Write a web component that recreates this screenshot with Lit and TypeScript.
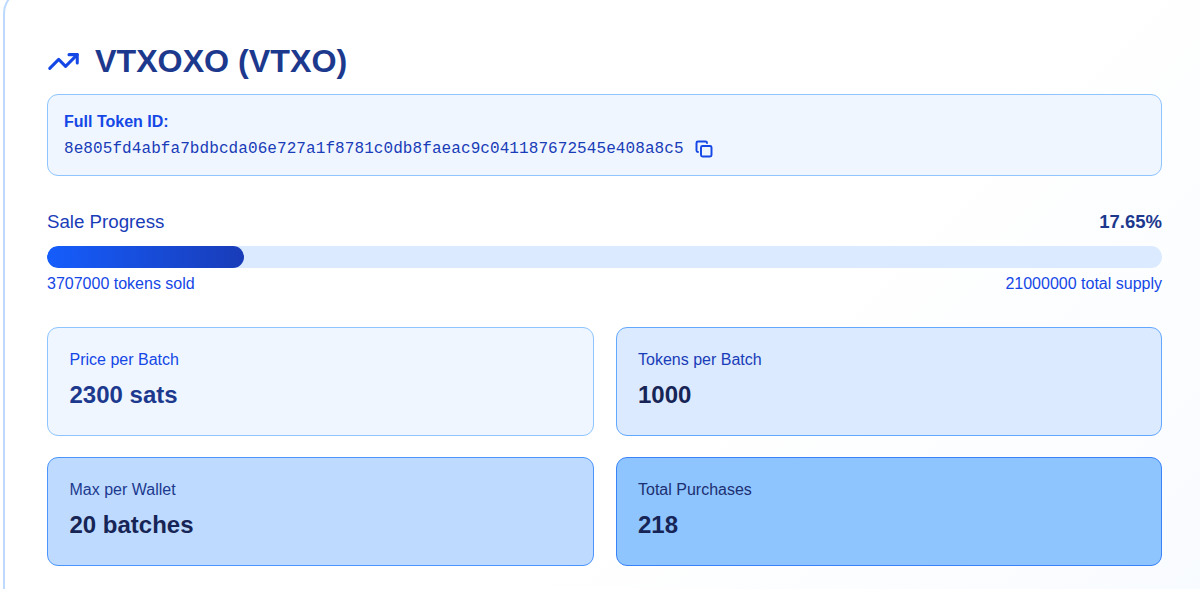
import { LitElement, css, html } from "lit";
import { customElement } from "lit/decorators.js";

const TOKEN_ID = "8e805fd4abfa7bdbcda06e727a1f8781c0db8faeac9c041187672545e408a8c5";

const STATS = [
  { label: "Price per Batch", value: "2300 sats", tone: "t1" },
  { label: "Tokens per Batch", value: "1000", tone: "t2" },
  { label: "Max per Wallet", value: "20 batches", tone: "t3" },
  { label: "Total Purchases", value: "218", tone: "t4" },
];

@customElement("app-root")
export class AppRoot extends LitElement {
  static styles = css`
    :host {
      display: block;
      height: 589px;
      overflow: hidden;
      background: #fff;
      font-family: "Liberation Sans", Arial, sans-serif;
    }
    .card {
      box-sizing: border-box;
      width: 1204px;
      height: 640px;
      margin: -12px 0 0 3px;
      padding: 48px 43px 0 42px;
      border: 2px solid #bedbff;
      border-radius: 26px;
      background: linear-gradient(135deg, #ffffff 60%, #f8fbff 100%);
    }
    .title {
      display: flex;
      align-items: center;
      gap: 15px;
      height: 47px;
      margin: 0 0 9px;
      color: #1c398e;
      font-size: 32.2px;
      font-weight: 700;
    }
    .title svg {
      width: 33px;
      height: 33px;
      color: #1447e6;
    }
    .id-box {
      box-sizing: border-box;
      height: 82px;
      padding: 17px 16px 0;
      border: 1px solid #8ec5ff;
      border-radius: 11px;
      background: #eff6ff;
    }
    .id-label {
      color: #1447e6;
      font-size: 16px;
      font-weight: 700;
      line-height: 20px;
    }
    .id-row {
      display: flex;
      align-items: center;
      gap: 11px;
      margin-top: 8px;
      color: #193cb8;
      font-family: "Liberation Mono", monospace;
      font-size: 16px;
      letter-spacing: 0.08px;
    }
    .id-row svg {
      width: 18px;
      height: 18px;
      color: #1447e6;
    }
    .progress-head {
      display: flex;
      justify-content: space-between;
      align-items: center;
      margin-top: 35px;
      height: 22px;
    }
    .progress-label {
      color: #193cb8;
      font-size: 18.7px;
    }
    .progress-pct {
      color: #1c398e;
      font-size: 18.5px;
      font-weight: 700;
    }
    .track {
      height: 22px;
      margin-top: 13px;
      border-radius: 11px;
      background: #dbeafe;
      overflow: hidden;
    }
    .fill {
      height: 100%;
      border-radius: 11px;
      background: linear-gradient(90deg, #155dfc, #193cb8);
    }
    .progress-foot {
      display: flex;
      justify-content: space-between;
      margin-top: 6px;
      color: #1447e6;
      font-size: 16px;
      line-height: 20px;
    }
    .stats {
      display: grid;
      grid-template-columns: 1fr 1fr;
      gap: 21px 22px;
      margin-top: 33px;
    }
    .stat {
      box-sizing: border-box;
      height: 109px;
      padding: 22px 21.5px;
      border: 1px solid #8ec5ff;
      border-radius: 11px;
    }
    .stat .label {
      font-size: 16px;
      line-height: 20px;
    }
    .stat .value {
      margin-top: 9px;
      font-size: 24px;
      font-weight: 700;
      line-height: 32px;
    }
    .t1 { background: #eff6ff; }
    .t1 .label { color: #1447e6; }
    .t1 .value { color: #1c398e; }
    .t2 { background: #dbeafe; border-color: #63a8ff; }
    .t2 .label { color: #193cb8; }
    .t2 .value { color: #162456; }
    .t3 { background: #bedbff; border-color: #4a94fb; }
    .t3 .label { color: #1c398e; }
    .t3 .value { color: #162456; }
    .t4 { background: #8ec5ff; border-color: #3a82f8; }
    .t4 .label { color: #1c2f70; }
    .t4 .value { color: #162456; }
  `;

  render() {
    return html`
      <section class="card">
        <h1 class="title">
          <svg viewBox="0 0 24 24" fill="none" stroke="currentColor" stroke-width="2.2" stroke-linecap="round" stroke-linejoin="round">
            <polyline points="22 7 13.5 15.5 8.5 10.5 2 17"></polyline>
            <polyline points="16 7 22 7 22 13"></polyline>
          </svg>
          VTXOXO (VTXO)
        </h1>
        <div class="id-box">
          <div class="id-label">Full Token ID:</div>
          <div class="id-row">
            <span>${TOKEN_ID}</span>
            <svg viewBox="0 0 24 24" fill="none" stroke="currentColor" stroke-width="2.6" stroke-linecap="round" stroke-linejoin="round">
              <rect x="8" y="8" width="14" height="14" rx="2"></rect>
              <path d="M4 16c-1.1 0-2-.9-2-2V4c0-1.1.9-2 2-2h10c1.1 0 2 .9 2 2"></path>
            </svg>
          </div>
        </div>
        <div class="progress-head">
          <span class="progress-label">Sale Progress</span>
          <span class="progress-pct">17.65%</span>
        </div>
        <div class="track"><div class="fill" style="width: 17.65%"></div></div>
        <div class="progress-foot">
          <span>3707000 tokens sold</span>
          <span>21000000 total supply</span>
        </div>
        <div class="stats">
          ${STATS.map(
            (s) => html`
              <div class="stat ${s.tone}">
                <div class="label">${s.label}</div>
                <div class="value">${s.value}</div>
              </div>
            `,
          )}
        </div>
      </section>
    `;
  }
}
